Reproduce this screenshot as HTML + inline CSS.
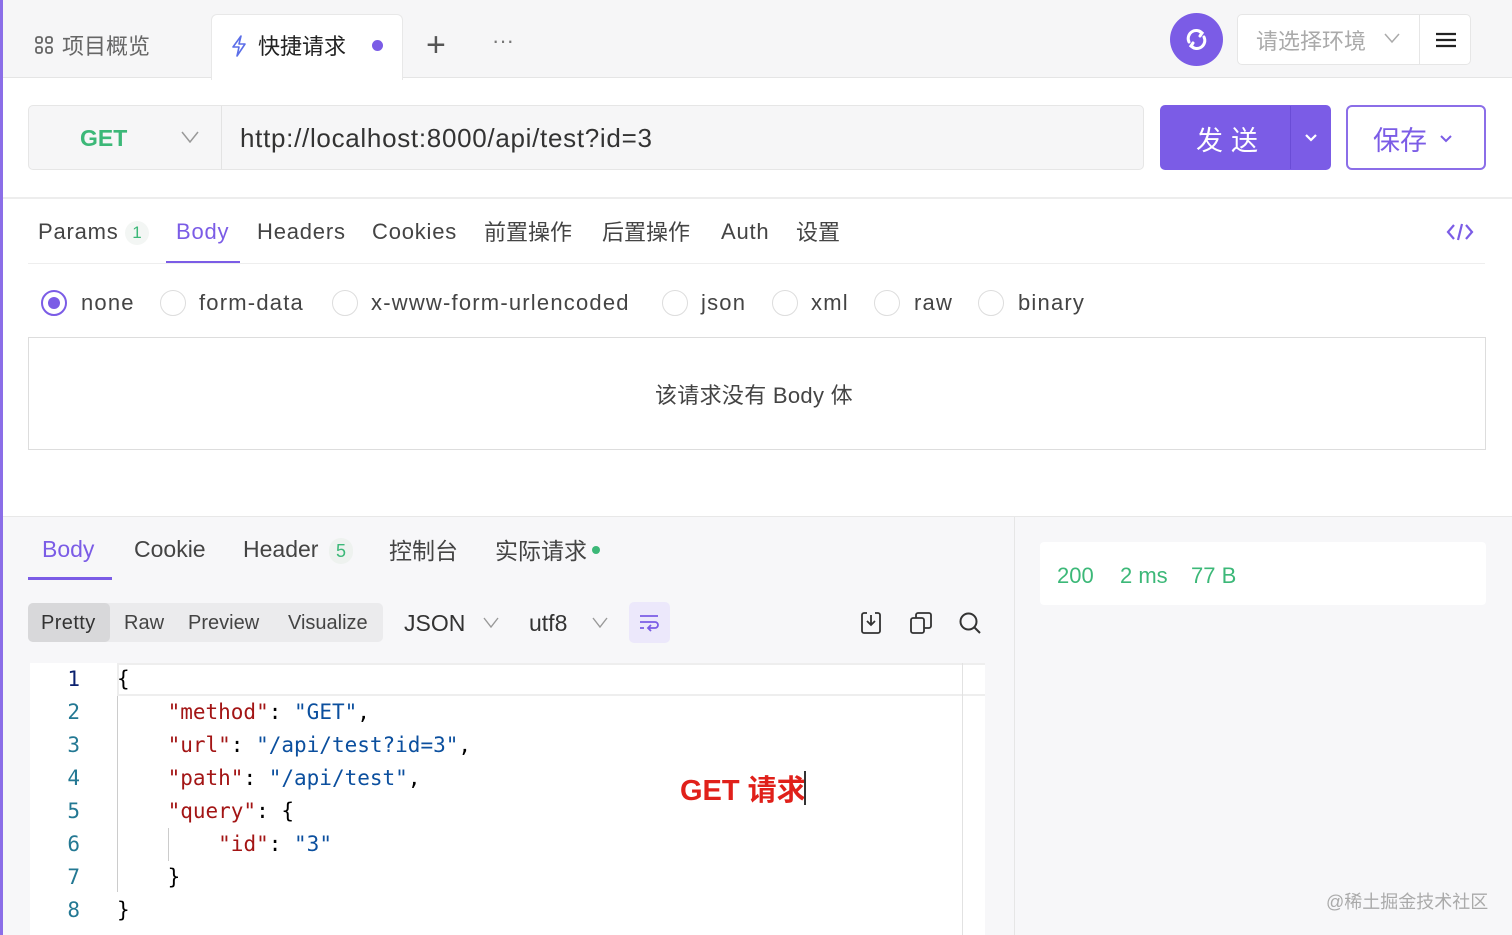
<!DOCTYPE html>
<html><head><meta charset="utf-8"><style>
*{box-sizing:border-box;margin:0;padding:0}
body{width:1512px;height:935px;overflow:hidden;background:#fff;font-family:"Liberation Sans","Noto Sans CJK SC",sans-serif;color:#333;position:relative}
.a{position:absolute;white-space:nowrap}
.mono{font-family:"DejaVu Sans Mono","Liberation Mono",monospace;font-size:21px}
.k{color:#a31515}.s{color:#0b4f9e}
.ls{letter-spacing:0.8px}
.rl{letter-spacing:1.2px}
.rad{position:absolute;width:26px;height:26px;border:1.5px solid #ddd;border-radius:50%;background:#fff}
</style></head><body>
<div class="a" style="left:0;top:0;width:3px;height:935px;background:#8b6ee8;z-index:5"></div>
<!-- top bar -->
<div class="a" style="left:0;top:0;width:1512px;height:78px;background:#f6f6f7;border-bottom:1px solid #e5e5e5"></div>
<div class="a" style="left:34px;top:35px;width:20px;height:20px">
<svg width="20" height="20" viewBox="0 0 20 20" fill="none" stroke="#666" stroke-width="1.8"><rect x="2" y="2" width="6" height="6" rx="2"/><rect x="12" y="2" width="6" height="6" rx="2"/><rect x="2" y="12" width="6" height="6" rx="2"/><rect x="12" y="12" width="6" height="6" rx="2"/></svg></div>
<div class="a" style="left:62px;top:29px;font-size:22px;color:#666">项目概览</div>
<div class="a" style="left:211px;top:14px;width:192px;height:66px;background:#fff;border:1px solid #e8e8e8;border-bottom:none;border-radius:6px 6px 0 0"></div>
<svg class="a" style="left:230px;top:35px" width="18" height="22" viewBox="0 0 18 22" fill="none" stroke="#5b6ee8" stroke-width="1.6" stroke-linejoin="round"><path d="M11 1 L3 12 H9 L7 21 L15 9 H9 Z"/></svg>
<div class="a" style="left:258px;top:29px;font-size:22px;color:#222">快捷请求</div>
<div class="a" style="left:372px;top:40px;width:11px;height:11px;border-radius:50%;background:#7b5ce6"></div>
<div class="a" style="left:426px;top:26px;font-size:34px;color:#555;font-weight:300">+</div>
<div class="a" style="left:492px;top:28px;font-size:22px;color:#777">···</div>
<div class="a" style="left:1170px;top:13px;width:53px;height:53px;border-radius:50%;background:#7b5ce6"></div>
<svg class="a" style="left:1183px;top:26px" width="27" height="27" viewBox="0 0 27 27" fill="none" stroke="#fff" stroke-width="3" stroke-linecap="round"><path d="M6 16 A8 8 0 0 1 19 7"/><path d="M21 11 A8 8 0 0 1 8 20"/><path d="M16 5 L19 7 L17 10"/><path d="M11 22 L8 20 L10 17"/></svg>
<div class="a" style="left:1237px;top:14px;width:234px;height:51px;background:#fff;border:1px solid #e6e6e6;border-radius:5px"></div>
<div class="a" style="left:1419px;top:14px;width:1px;height:51px;background:#e6e6e6"></div>
<div class="a" style="left:1256px;top:24px;font-size:22px;color:#aaa">请选择环境</div>
<svg class="a" style="left:1384px;top:32px" width="16" height="12" viewBox="0 0 16 12" fill="none" stroke="#aaa" stroke-width="1.5"><path d="M1 2 L8 10 L15 2"/></svg>
<svg class="a" style="left:1436px;top:32px" width="20" height="16" viewBox="0 0 20 16" stroke="#222" stroke-width="2.2"><path d="M0 2H20M0 8H20M0 14H20"/></svg>
<!-- url row -->
<div class="a" style="left:28px;top:105px;width:1116px;height:65px;background:#f6f6f7;border:1px solid #e6e6e6;border-radius:5px"></div>
<div class="a" style="left:221px;top:106px;width:1px;height:63px;background:#e3e3e3"></div>
<div class="a" style="left:80px;top:125px;font-size:23px;font-weight:bold;color:#3cb878">GET</div>
<svg class="a" style="left:181px;top:131px" width="18" height="12" viewBox="0 0 18 12" fill="none" stroke="#999" stroke-width="1.5"><path d="M1 1 L9 11 L17 1"/></svg>
<div class="a" style="left:240px;top:123px;font-size:26px;color:#333;letter-spacing:0.7px">http://localhost:8000/api/test?id=3</div>
<div class="a" style="left:1160px;top:105px;width:171px;height:65px;background:#7b5ce6;border-radius:5px"></div>
<div class="a" style="left:1290px;top:106px;width:1px;height:63px;background:#6a4cd6"></div>
<div class="a" style="left:1196px;top:119px;font-size:27px;color:#fff;letter-spacing:8px">发送</div>
<svg class="a" style="left:1304px;top:133px" width="14" height="9" viewBox="0 0 14 9" fill="none" stroke="#fff" stroke-width="2.2"><path d="M2 2 L7 7 L12 2"/></svg>
<div class="a" style="left:1346px;top:105px;width:140px;height:65px;border:2px solid #8b6ee8;border-radius:6px;background:#fff"></div>
<div class="a" style="left:1373px;top:119px;font-size:27px;color:#7b5ce6">保存</div>
<svg class="a" style="left:1439px;top:134px" width="14" height="9" viewBox="0 0 14 9" fill="none" stroke="#7b5ce6" stroke-width="2"><path d="M2 2 L7 7 L12 2"/></svg>
<div class="a" style="left:0;top:197px;width:1512px;height:2px;background:#ededed"></div>
<!-- request tabs -->
<div class="a ls" style="left:38px;top:219px;font-size:22px;color:#444">Params</div>
<div class="a" style="left:125px;top:221px;width:24px;height:24px;border-radius:12px;background:#f3f6f4;color:#3cb878;font-size:17px;text-align:center;line-height:24px">1</div>
<div class="a ls" style="left:176px;top:219px;font-size:22px;color:#7b5ce6">Body</div>
<div class="a" style="left:166px;top:261px;width:74px;height:3px;background:#7b5ce6"></div>
<div class="a ls" style="left:257px;top:219px;font-size:22px;color:#444">Headers</div>
<div class="a ls" style="left:372px;top:219px;font-size:22px;color:#444">Cookies</div>
<div class="a" style="left:484px;top:215px;font-size:22px;color:#444">前置操作</div>
<div class="a" style="left:602px;top:215px;font-size:22px;color:#444">后置操作</div>
<div class="a ls" style="left:721px;top:219px;font-size:22px;color:#444">Auth</div>
<div class="a" style="left:796px;top:215px;font-size:22px;color:#444">设置</div>
<svg class="a" style="left:1446px;top:222px" width="28" height="20" viewBox="0 0 28 20" fill="none" stroke="#7b5ce6" stroke-width="2.2"><path d="M8 3 L2 10 L8 17M20 3 L26 10 L20 17M16 2 L12 18"/></svg>
<div class="a" style="left:28px;top:263px;width:1457px;height:1px;background:#eee"></div>
<!-- radios -->
<div class="rad" style="left:41px;top:290px;border:2px solid #7b5ce6"></div>
<div class="a" style="left:48px;top:297px;width:12px;height:12px;border-radius:50%;background:#7b5ce6"></div>
<div class="a rl" style="left:81px;top:290px;font-size:22px;color:#444">none</div>
<div class="rad" style="left:160px;top:290px"></div>
<div class="a rl" style="left:199px;top:290px;font-size:22px;color:#444">form-data</div>
<div class="rad" style="left:332px;top:290px"></div>
<div class="a rl" style="left:371px;top:290px;font-size:22px;color:#444">x-www-form-urlencoded</div>
<div class="rad" style="left:662px;top:290px"></div>
<div class="a rl" style="left:701px;top:290px;font-size:22px;color:#444">json</div>
<div class="rad" style="left:772px;top:290px"></div>
<div class="a rl" style="left:811px;top:290px;font-size:22px;color:#444">xml</div>
<div class="rad" style="left:874px;top:290px"></div>
<div class="a rl" style="left:914px;top:290px;font-size:22px;color:#444">raw</div>
<div class="rad" style="left:978px;top:290px"></div>
<div class="a rl" style="left:1018px;top:290px;font-size:22px;color:#444">binary</div>
<div class="a" style="left:28px;top:337px;width:1458px;height:113px;border:1px solid #ddd;background:#fff"></div>
<div class="a" style="left:655px;top:378px;font-size:22px;color:#444;letter-spacing:0.3px">该请求没有 Body 体</div>
<!-- bottom -->
<div class="a" style="left:0;top:516px;width:1512px;height:419px;background:#f7f7f9;border-top:1px solid #e8e8e8"></div>
<div class="a" style="left:1014px;top:517px;width:1px;height:418px;background:#e6e6e6"></div>
<div class="a" style="left:42px;top:536px;font-size:23px;color:#7b5ce6">Body</div>
<div class="a" style="left:28px;top:577px;width:84px;height:3px;background:#7b5ce6"></div>
<div class="a" style="left:134px;top:536px;font-size:23px;color:#444">Cookie</div>
<div class="a" style="left:243px;top:536px;font-size:23px;color:#444">Header</div>
<div class="a" style="left:329px;top:538px;width:24px;height:26px;border-radius:12px;background:#eef2ef;color:#3cb878;font-size:18px;text-align:center;line-height:26px">5</div>
<div class="a" style="left:389px;top:532px;font-size:23px;color:#444">控制台</div>
<div class="a" style="left:495px;top:532px;font-size:23px;color:#444">实际请求</div>
<div class="a" style="left:592px;top:546px;width:8px;height:8px;border-radius:50%;background:#3cb878"></div>
<div class="a" style="left:28px;top:603px;width:355px;height:39px;background:#ebebed;border-radius:5px"></div>
<div class="a" style="left:28px;top:603px;width:82px;height:39px;background:#d8d8da;border-radius:5px"></div>
<div class="a" style="left:41px;top:612px;font-size:20px;color:#333;letter-spacing:0.4px">Pretty</div>
<div class="a" style="left:124px;top:612px;font-size:20px;color:#444">Raw</div>
<div class="a" style="left:188px;top:612px;font-size:20px;color:#444">Preview</div>
<div class="a" style="left:288px;top:612px;font-size:20px;color:#444">Visualize</div>
<div class="a" style="left:404px;top:610px;font-size:23px;color:#333">JSON</div>
<svg class="a" style="left:483px;top:617px" width="16" height="11" viewBox="0 0 16 11" fill="none" stroke="#999" stroke-width="1.4"><path d="M1 1 L8 10 L15 1"/></svg>
<div class="a" style="left:529px;top:610px;font-size:23px;color:#333">utf8</div>
<svg class="a" style="left:592px;top:617px" width="16" height="11" viewBox="0 0 16 11" fill="none" stroke="#999" stroke-width="1.4"><path d="M1 1 L8 10 L15 1"/></svg>
<div class="a" style="left:629px;top:602px;width:41px;height:41px;background:#ece8fb;border-radius:5px"></div>
<svg class="a" style="left:638px;top:612px" width="22" height="22" viewBox="0 0 22 22" fill="none" stroke="#7b5ce6" stroke-width="1.8"><path d="M2 4H20M2 10H17a3 3 0 0 1 0 6H11M13 13 L10 16 L13 19M2 16H6"/></svg>
<svg class="a" style="left:860px;top:611px" width="22" height="24" viewBox="0 0 22 24" fill="none" stroke="#333" stroke-width="1.8"><path d="M7 2H4a2 2 0 0 0-2 2V20a2 2 0 0 0 2 2H18a2 2 0 0 0 2-2V4a2 2 0 0 0-2-2H15M11 4V13M7 10 L11 14 L15 10"/></svg>
<svg class="a" style="left:909px;top:611px" width="24" height="24" viewBox="0 0 24 24" fill="none" stroke="#333" stroke-width="1.8"><rect x="2" y="7" width="13" height="15" rx="2"/><path d="M7 7V4a2 2 0 0 1 2-2H20a2 2 0 0 1 2 2V15a2 2 0 0 1-2 2H15"/></svg>
<svg class="a" style="left:958px;top:611px" width="24" height="24" viewBox="0 0 24 24" fill="none" stroke="#333" stroke-width="2"><circle cx="10.5" cy="10.5" r="8"/><path d="M16.5 16.5 L22 22"/></svg>
<!-- code -->
<div class="a" style="left:30px;top:663px;width:955px;height:272px;background:#fff"></div>
<div class="a" style="left:117px;top:663px;width:868px;height:33px;border:2px solid #eee;border-right:none"></div>
<div class="a" style="left:962px;top:663px;width:1px;height:272px;background:#e2e2e2"></div>
<div class="a" style="left:117px;top:696px;width:1px;height:196px;background:#ccc"></div>
<div class="a" style="left:168px;top:828px;width:1px;height:33px;background:#ccc"></div>
<div class="a mono" style="left:32px;top:663px;width:48px;text-align:right;line-height:33px;color:#237893">
<div style="color:#0b216f">1</div><div>2</div><div>3</div><div>4</div><div>5</div><div>6</div><div>7</div><div>8</div></div>
<div class="a mono" style="left:117px;top:663px;line-height:33px;color:#000;white-space:pre">{
    <span class="k">"method"</span>: <span class="s">"GET"</span>,
    <span class="k">"url"</span>: <span class="s">"/api/test?id=3"</span>,
    <span class="k">"path"</span>: <span class="s">"/api/test"</span>,
    <span class="k">"query"</span>: {
        <span class="k">"id"</span>: <span class="s">"3"</span>
    }
}</div>
<div class="a" style="left:680px;top:767px;font-size:29px;font-weight:bold;color:#e0201a">GET 请求</div>
<div class="a" style="left:804px;top:771px;width:2px;height:34px;background:#333"></div>
<!-- right -->
<div class="a" style="left:1040px;top:542px;width:446px;height:63px;background:#fff;border-radius:4px"></div>
<div class="a" style="left:1057px;top:563px;font-size:22px;color:#3cb878">200</div>
<div class="a" style="left:1120px;top:563px;font-size:22px;color:#3cb878">2 ms</div>
<div class="a" style="left:1191px;top:563px;font-size:22px;color:#3cb878">77 B</div>
<div class="a" style="left:1326px;top:888px;font-size:18px;color:#aaa">@稀土掘金技术社区</div>
</body></html>
